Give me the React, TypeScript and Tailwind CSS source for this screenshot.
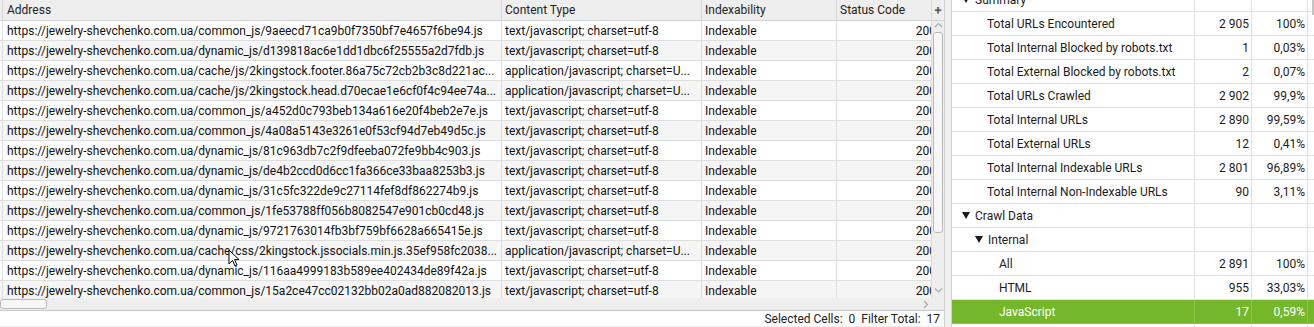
import React from 'react';

type Row = { url: string; type: string };

const rows: Row[] = [
  { url: 'https://jewelry-shevchenko.com.ua/common_js/9aeecd71ca9b0f7350bf7e4657f6be94.js', type: 'text/javascript; charset=utf-8' },
  { url: 'https://jewelry-shevchenko.com.ua/dynamic_js/d139818ac6e1dd1dbc6f25555a2d7fdb.js', type: 'text/javascript; charset=utf-8' },
  { url: 'https://jewelry-shevchenko.com.ua/cache/js/2kingstock.footer.86a75c72cb2b3c8d221ac...', type: 'application/javascript; charset=U...' },
  { url: 'https://jewelry-shevchenko.com.ua/cache/js/2kingstock.head.d70ecae1e6cf0f4c94ee74a...', type: 'application/javascript; charset=U...' },
  { url: 'https://jewelry-shevchenko.com.ua/common_js/a452d0c793beb134a616e20f4beb2e7e.js', type: 'text/javascript; charset=utf-8' },
  { url: 'https://jewelry-shevchenko.com.ua/common_js/4a08a5143e3261e0f53cf94d7eb49d5c.js', type: 'text/javascript; charset=utf-8' },
  { url: 'https://jewelry-shevchenko.com.ua/dynamic_js/81c963db7c2f9dfeeba072fe9bb4c903.js', type: 'text/javascript; charset=utf-8' },
  { url: 'https://jewelry-shevchenko.com.ua/dynamic_js/de4b2ccd0d6cc1fa366ce33baa8253b3.js', type: 'text/javascript; charset=utf-8' },
  { url: 'https://jewelry-shevchenko.com.ua/dynamic_js/31c5fc322de9c27114fef8df862274b9.js', type: 'text/javascript; charset=utf-8' },
  { url: 'https://jewelry-shevchenko.com.ua/common_js/1fe53788ff056b8082547e901cb0cd48.js', type: 'text/javascript; charset=utf-8' },
  { url: 'https://jewelry-shevchenko.com.ua/dynamic_js/9721763014fb3bf759bf6628a665415e.js', type: 'text/javascript; charset=utf-8' },
  { url: 'https://jewelry-shevchenko.com.ua/cache/css/2kingstock.jssocials.min.js.35ef958fc2038...', type: 'application/javascript; charset=U...' },
  { url: 'https://jewelry-shevchenko.com.ua/dynamic_js/116aa4999183b589ee402434de89f42a.js', type: 'text/javascript; charset=utf-8' },
  { url: 'https://jewelry-shevchenko.com.ua/common_js/15a2ce47cc02132bb02a0ad882082013.js', type: 'text/javascript; charset=utf-8' },
];

type Stat = { label: string; count?: string; pct?: string; level: number; toggle?: boolean; active?: boolean };

const stats: Stat[] = [
  { label: 'Summary', level: 0, toggle: true },
  { label: 'Total URLs Encountered', count: '2 905', pct: '100%', level: 1 },
  { label: 'Total Internal Blocked by robots.txt', count: '1', pct: '0,03%', level: 1 },
  { label: 'Total External Blocked by robots.txt', count: '2', pct: '0,07%', level: 1 },
  { label: 'Total URLs Crawled', count: '2 902', pct: '99,9%', level: 1 },
  { label: 'Total Internal URLs', count: '2 890', pct: '99,59%', level: 1 },
  { label: 'Total External URLs', count: '12', pct: '0,41%', level: 1 },
  { label: 'Total Internal Indexable URLs', count: '2 801', pct: '96,89%', level: 1 },
  { label: 'Total Internal Non-Indexable URLs', count: '90', pct: '3,11%', level: 1 },
  { label: 'Crawl Data', level: 0, toggle: true },
  { label: 'Internal', level: 1, toggle: true },
  { label: 'All', count: '2 891', pct: '100%', level: 2 },
  { label: 'HTML', count: '955', pct: '33,03%', level: 2 },
  { label: 'JavaScript', count: '17', pct: '0,59%', level: 2, active: true },
  { label: '', level: 2 },
];

const Tri = () => (
  <svg width="8" height="7" viewBox="0 0 8 7" className="shrink-0">
    <path d="M0 0 L8 0 L4 7 Z" fill="#1a1a1a" />
  </svg>
);

const Chevron = ({ dir }: { dir: 'up' | 'down' | 'right' }) => {
  const d = dir === 'up' ? 'M1 5 L4.5 1.5 L8 5' : dir === 'down' ? 'M1 1.5 L4.5 5 L8 1.5' : 'M2 1 L5.5 4.5 L2 8';
  return (
    <svg width="9" height="9" viewBox="0 0 9 9">
      <path d={d} fill="none" stroke="#a8a8a8" strokeWidth="1.1" />
    </svg>
  );
};

function DataTable() {
  return (
    <div className="flex h-[298px] bg-white">
      <div className="w-[932px] overflow-hidden flex flex-col">
        <div className="flex h-[21px] shrink-0 bg-[#eeeeee] border-b border-[#d2d2d2] text-[#222]">
          <div className="w-[3px] shrink-0 border-r border-[#d6d6d6]" />
          <div className="w-[499px] shrink-0 px-[4px] leading-[21px] border-r border-[#d6d6d6]">Address</div>
          <div className="w-[200px] shrink-0 px-[3px] leading-[21px] border-r border-[#d6d6d6]">Content Type</div>
          <div className="w-[135px] shrink-0 px-[3px] leading-[21px] border-r border-[#d6d6d6]">Indexability</div>
          <div className="w-[103px] shrink-0 px-[3px] leading-[21px]">Status Code</div>
        </div>
        <div className="flex-1 overflow-hidden">
          {rows.map((r, i) => (
            <div
              key={i}
              className={`flex h-[20px] border-b border-[#dedede] text-[#111] ${i % 2 === 1 ? 'bg-[#f5f5f5]' : 'bg-white'}`}
            >
              <div className="w-[3px] shrink-0 border-r border-[#dedede]" />
              <div className="w-[499px] shrink-0 px-[4px] leading-[20px] whitespace-nowrap overflow-hidden border-r border-[#dedede]">{r.url}</div>
              <div className="w-[200px] shrink-0 px-[3px] leading-[20px] whitespace-nowrap overflow-hidden border-r border-[#dedede]">{r.type}</div>
              <div className="w-[135px] shrink-0 px-[3px] leading-[20px] border-r border-[#dedede]">Indexable</div>
              <div className="w-[103px] shrink-0 pr-[4px] leading-[20px] text-right">200</div>
            </div>
          ))}
        </div>
      </div>
      <div className="w-[13px] shrink-0 flex flex-col bg-[#eeeeee] border-l border-[#dadada]">
        <div className="h-[21px] flex items-center justify-center border-b border-[#d2d2d2] text-[#555] font-bold text-[13px] leading-none">+</div>
        <div className="flex justify-center pt-[1px]">
          <Chevron dir="up" />
        </div>
        <div className="mx-[1px] mt-[1px] h-[201px] rounded-[3px] border border-[#b9b9b9] bg-[#f7f7f7]" />
        <div className="flex-1" />
        <div className="flex justify-center pb-[2px]">
          <Chevron dir="down" />
        </div>
      </div>
    </div>
  );
}

function LeftPanel() {
  return (
    <div className="relative w-[945px] shrink-0 flex flex-col border-r border-[#d0d0d0]">
      <DataTable />
      <div className="flex h-[13px] bg-[#eeeeee] border-b border-[#c8c8c8]">
        <div className="w-[932px] flex items-center">
          <div className="w-[47px] h-[10px] rounded-[3px] border border-[#b9b9b9] bg-[#f7f7f7]" />
          <div className="flex-1" />
          <div className="pr-[1px] flex items-center">
            <Chevron dir="right" />
          </div>
        </div>
      </div>
      <div className="h-[15px] bg-white flex items-center justify-end pr-[4px] text-[12px] text-[#222] leading-none whitespace-pre">
        Selected Cells:  0  Filter Total:  17
      </div>
      <div className="flex-1 bg-[#f0f0f0]" />
      <svg width="14" height="20" viewBox="0 0 14 20" className="absolute left-[228px] top-[249px]">
        <path d="M1 1 L1 15 L4.5 11.5 L7 17 L9 16 L6.6 10.6 L11 10.6 Z" fill="#ffffff" stroke="#000000" strokeWidth="1" strokeLinejoin="round" />
      </svg>
    </div>
  );
}

function StatsPanel() {
  return (
    <div className="flex-1 bg-white overflow-hidden text-[12px] border-l border-[#d0d0d0]">
      <div className="-mt-[12px]">
        {stats.map((s, i) => {
          const indent = s.toggle ? (s.level === 0 ? 10 : 23) : s.level === 1 ? 35 : 47;
          return (
            <div
              key={i}
              className={`flex h-[24px] border-b ${s.active ? 'bg-[#74b72b] text-white border-[#8cc44f]' : 'text-[#1c1c1c] border-[#e2e2e2]'}`}
            >
              <div
                className={`w-[243px] shrink-0 flex items-center gap-[5px] border-r ${s.active ? 'border-[#8cc44f]' : 'border-[#e2e2e2]'}`}
                style={{ paddingLeft: indent }}
              >
                {s.toggle && <Tri />}
                <span className="whitespace-nowrap">{s.label}</span>
              </div>
              <div
                className={`w-[57px] shrink-0 flex items-center justify-end pr-[2px] border-r ${s.active ? 'border-[#8cc44f]' : 'border-[#e2e2e2]'}`}
              >
                {s.count}
              </div>
              <div
                className={`w-[56px] shrink-0 flex items-center justify-end pr-[2px] border-r ${s.active ? 'border-[#8cc44f]' : 'border-[#e2e2e2]'}`}
              >
                {s.pct}
              </div>
              <div className="flex-1 relative">
                {i === 0 && <div className="absolute right-0 top-[12px] w-[2px] h-[15px] bg-[#c4c4c4]" />}
              </div>
            </div>
          );
        })}
      </div>
    </div>
  );
}

export default function App() {
  return (
    <div className="w-[1314px] h-[327px] flex bg-[#f0f0f0] overflow-hidden text-[12px] font-['Roboto',sans-serif]">
      <LeftPanel />
      <div className="w-[6px] shrink-0 bg-[#f0f0f0]" />
      <StatsPanel />
    </div>
  );
}
